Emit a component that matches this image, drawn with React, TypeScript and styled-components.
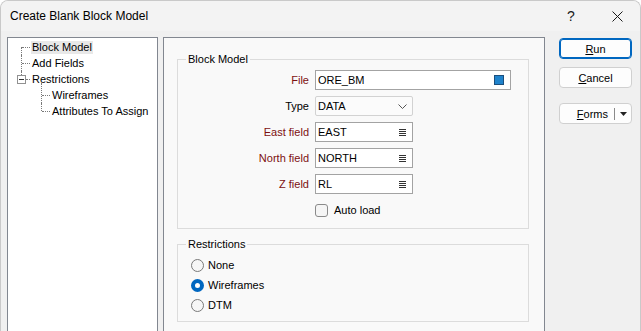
import { FC, Fragment } from 'react';
import styled, { createGlobalStyle } from 'styled-components';

const GlobalStyle = createGlobalStyle`
  html, body {
    margin: 0;
    padding: 0;
    background: #ffffff;
    overflow: hidden;
  }
  body {
    font-family: "Liberation Sans", Arial, sans-serif;
    font-size: 11px;
    color: #000000;
  }
  * {
    box-sizing: border-box;
  }
`;

const Window = styled.div`
  width: 641px;
  height: 331px;
  border: 1px solid #c9c9c9;
  border-bottom: none;
  border-radius: 8px 8px 0 0;
  background: #f0f0f0;
  display: flex;
  flex-direction: column;
  overflow: hidden;
`;

const TitleBar = styled.div`
  height: 30px;
  flex-shrink: 0;
  display: flex;
  align-items: center;
  background: #f3f3f3;
`;

const Title = styled.div`
  flex: 1;
  padding-left: 9px;
  font-size: 12px;
`;

const CaptionButton = styled.div`
  width: 46px;
  height: 30px;
  display: flex;
  align-items: center;
  justify-content: center;
  font-size: 14px;
  color: #1a1a1a;
`;

const Body = styled.div`
  flex: 1;
  display: flex;
  padding: 6px 8px 0 6px;
`;

const TreePanel = styled.div`
  width: 151px;
  flex-shrink: 0;
  border: 1px solid #828790;
  border-bottom: none;
  background: #ffffff;
  padding-top: 1px;
`;

const TreeRow = styled.div<{ level: number }>`
  height: 16px;
  display: flex;
  align-items: center;
  padding-left: ${({ level }) => level * 20 + 5}px;
`;

const TreeGuide = styled.div<{ top: number; bottom: number; expander?: boolean }>`
  width: 18px;
  align-self: stretch;
  position: relative;
  &::before {
    content: '';
    position: absolute;
    left: 8px;
    top: ${({ top }) => top}px;
    bottom: ${({ bottom }) => bottom}px;
    border-left: 1px dotted #7a7a7a;
  }
  &::after {
    content: '';
    position: absolute;
    top: 8px;
    left: ${({ expander }) => (expander ? 13 : 9)}px;
    right: 1px;
    border-top: 1px dotted #7a7a7a;
  }
`;

const Expander = styled.div`
  position: absolute;
  left: 4px;
  top: 4px;
  width: 9px;
  height: 9px;
  border: 1px solid #919191;
  background: #ffffff;
  z-index: 1;
  &::after {
    content: '';
    position: absolute;
    left: 1px;
    top: 3px;
    width: 5px;
    border-top: 1px solid #333333;
  }
`;

const TreeLabel = styled.div<{ selected?: boolean }>`
  padding: 0 1px;
  line-height: 13px;
  white-space: nowrap;
  background: ${({ selected }) => (selected ? '#e8e8e8' : 'transparent')};
`;

const MainPanel = styled.div`
  width: 382px;
  flex-shrink: 0;
  margin-left: 5px;
  border: 1px solid #828790;
  border-bottom: none;
  background: #f9f9f9;
  padding: 14px 15px 0 13px;
  display: flex;
  flex-direction: column;
  gap: 8px;
`;

const GroupBox = styled.fieldset<{ pad: string }>`
  margin: 0;
  min-width: 0;
  border: 1px solid #dcdcdc;
  padding: ${({ pad }) => pad};
`;

const GroupTitle = styled.legend`
  padding: 0 2px;
  line-height: 14px;
  font-size: 11px;
`;

const FieldGrid = styled.div`
  display: grid;
  grid-template-columns: 123px auto;
  column-gap: 6px;
  row-gap: 6px;
  align-items: center;
  justify-items: start;
`;

const FieldLabel = styled.div<{ required?: boolean }>`
  justify-self: end;
  color: ${({ required }) => (required ? '#7d1010' : '#000000')};
`;

const TextBox = styled.div<{ width: number }>`
  width: ${({ width }) => width}px;
  height: 20px;
  border: 1px solid #a3a3a3;
  background: #ffffff;
  display: flex;
  align-items: center;
  padding: 0 6px 0 2px;
`;

const SelectBox = styled.div`
  width: 98px;
  height: 20px;
  border: 1px solid #d2d2d2;
  border-radius: 2px;
  background: #fbfbfb;
  display: flex;
  align-items: center;
  padding: 0 5px 0 2px;
`;

const BoxValue = styled.span`
  flex: 1;
`;

const FileSwatch = styled.span`
  width: 10px;
  height: 10px;
  background: #1f83cc;
  border: 1px solid #1b4f7d;
`;

const CheckRow = styled.label`
  grid-column: 2;
  display: flex;
  align-items: center;
  gap: 6px;
  height: 14px;
  margin-top: 3px;
`;

const Checkbox = styled.span`
  width: 13px;
  height: 13px;
  border: 1px solid #8a8a8a;
  border-radius: 3px;
  background: #f5f5f5;
`;

const RadioList = styled.div`
  display: flex;
  flex-direction: column;
  padding-left: 5px;
`;

const RadioRow = styled.label`
  height: 20px;
  display: flex;
  align-items: center;
  gap: 4px;
`;

const Radio = styled.span<{ checked?: boolean }>`
  width: 13px;
  height: 13px;
  border-radius: 50%;
  border: ${({ checked }) => (checked ? '4px solid #0067c0' : '1px solid #7a7a7a')};
  background: ${({ checked }) => (checked ? '#ffffff' : '#f6f6f6')};
`;

const ButtonColumn = styled.div`
  width: 73px;
  margin-left: 14px;
  margin-top: 1px;
  display: flex;
  flex-direction: column;
  gap: 8px;
`;

const Button = styled.div<{ primary?: boolean; spaced?: boolean }>`
  height: 21px;
  border-radius: 4px;
  border: 1px solid ${({ primary }) => (primary ? '#0067c0' : '#d0d0d0')};
  box-shadow: ${({ primary }) => (primary ? 'inset 0 0 0 1px #0067c0' : 'none')};
  background: #fdfdfd;
  display: flex;
  align-items: center;
  justify-content: center;
  margin-top: ${({ spaced }) => (spaced ? 7 : 0)}px;
`;

const SplitLabel = styled.span`
  flex: 1;
  text-align: right;
  padding-right: 6px;
`;

const SplitDivider = styled.span`
  width: 1px;
  height: 12px;
  background: #8a8a8a;
`;

const SplitArrow = styled.span`
  width: 16px;
  display: flex;
  justify-content: center;
`;

const ListIcon: FC = () => (
  <svg width="7" height="7" viewBox="0 0 7 7">
    {[0.5, 2.5, 4.5, 6.5].map((y) => (
      <line key={y} x1="0" x2="7" y1={y} y2={y} stroke="#333" strokeWidth="1" />
    ))}
  </svg>
);

const Chevron: FC = () => (
  <svg width="9" height="5" viewBox="0 0 9 5">
    <polyline points="0.5,0.5 4.5,4.5 8.5,0.5" fill="none" stroke="#555" strokeWidth="1" />
  </svg>
);

const CloseIcon: FC = () => (
  <svg width="11" height="11" viewBox="0 0 11 11">
    <path d="M0.5 0.5 L10.5 10.5 M10.5 0.5 L0.5 10.5" stroke="#1a1a1a" strokeWidth="1" />
  </svg>
);

const DropArrow: FC = () => (
  <svg width="7" height="4" viewBox="0 0 7 4">
    <polygon points="0,0 7,0 3.5,4" fill="#222" />
  </svg>
);

const Mnemonic: FC<{ text: string }> = ({ text }) => (
  <span>
    <u>{text[0]}</u>
    {text.slice(1)}
  </span>
);

const tree = [
  { label: 'Block Model', level: 0, top: 8, bottom: 0, selected: true },
  { label: 'Add Fields', level: 0, top: 0, bottom: 0 },
  { label: 'Restrictions', level: 0, top: 0, bottom: 8, expander: true },
  { label: 'Wireframes', level: 1, top: -4, bottom: 0 },
  { label: 'Attributes To Assign', level: 1, top: 0, bottom: 8 },
];

const fields = [
  { label: 'East field', value: 'EAST' },
  { label: 'North field', value: 'NORTH' },
  { label: 'Z field', value: 'RL' },
];

const restrictions = [
  { label: 'None', checked: false },
  { label: 'Wireframes', checked: true },
  { label: 'DTM', checked: false },
];

export default function App() {
  return (
    <>
      <GlobalStyle />
      <Window>
        <TitleBar>
          <Title>Create Blank Block Model</Title>
          <CaptionButton>?</CaptionButton>
          <CaptionButton>
            <CloseIcon />
          </CaptionButton>
        </TitleBar>

        <Body>
          <TreePanel>
            {tree.map((item) => (
              <TreeRow key={item.label} level={item.level}>
                <TreeGuide top={item.top} bottom={item.bottom} expander={item.expander}>
                  {item.expander && <Expander />}
                </TreeGuide>
                <TreeLabel selected={item.selected}>{item.label}</TreeLabel>
              </TreeRow>
            ))}
          </TreePanel>

          <MainPanel>
            <GroupBox pad="4px 8px 11px 8px">
              <GroupTitle>Block Model</GroupTitle>
              <FieldGrid>
                <FieldLabel required>File</FieldLabel>
                <TextBox width={196}>
                  <BoxValue>ORE_BM</BoxValue>
                  <FileSwatch />
                </TextBox>

                <FieldLabel>Type</FieldLabel>
                <SelectBox>
                  <BoxValue>DATA</BoxValue>
                  <Chevron />
                </SelectBox>

                {fields.map((f) => (
                  <Fragment key={f.label}>
                    <FieldLabel required>{f.label}</FieldLabel>
                    <TextBox width={98}>
                      <BoxValue>{f.value}</BoxValue>
                      <ListIcon />
                    </TextBox>
                  </Fragment>
                ))}

                <CheckRow>
                  <Checkbox />
                  Auto load
                </CheckRow>
              </FieldGrid>
            </GroupBox>

            <GroupBox pad="4px 8px 6px 8px">
              <GroupTitle>Restrictions</GroupTitle>
              <RadioList>
                {restrictions.map((r) => (
                  <RadioRow key={r.label}>
                    <Radio checked={r.checked} />
                    {r.label}
                  </RadioRow>
                ))}
              </RadioList>
            </GroupBox>
          </MainPanel>

          <ButtonColumn>
            <Button primary>
              <Mnemonic text="Run" />
            </Button>
            <Button>
              <Mnemonic text="Cancel" />
            </Button>
            <Button spaced>
              <SplitLabel>
                <Mnemonic text="Forms" />
              </SplitLabel>
              <SplitDivider />
              <SplitArrow>
                <DropArrow />
              </SplitArrow>
            </Button>
          </ButtonColumn>
        </Body>
      </Window>
    </>
  );
}
